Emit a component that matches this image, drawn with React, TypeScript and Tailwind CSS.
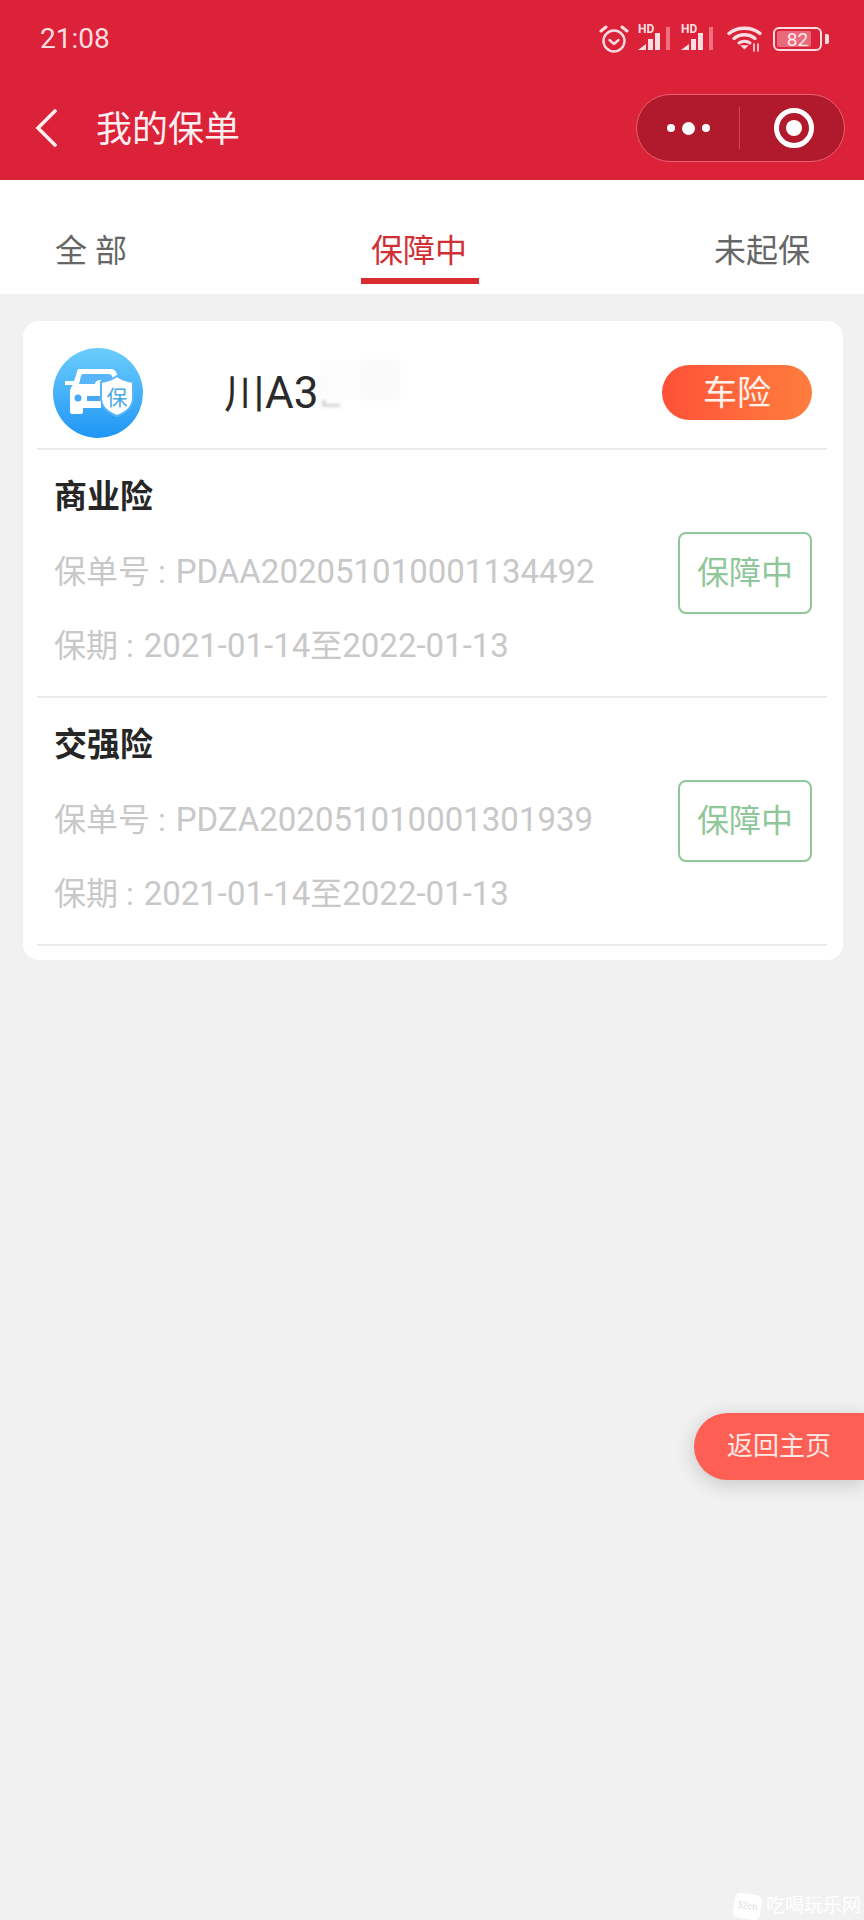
import React from 'react';

const policies = [
  { name: '商业险', no: 'PDAA202051010001134492' },
  { name: '交强险', no: 'PDZA202051010001301939' },
];

const Signal = () => (
  <div className="relative h-[26px] w-[34px]">
    <span className="absolute left-0 top-[-3px] text-[12px] leading-[12px] font-bold text-[#fbdde1]">HD</span>
    <svg width="34" height="26" viewBox="0 0 34 26" className="absolute left-0 top-0">
      <path d="M0 24 L8 18 V24 Z" fill="#fbdde1" />
      <rect x="10" y="13" width="5" height="11" fill="#fbdde1" />
      <rect x="17" y="7" width="5" height="17" fill="#fbdde1" />
      <rect x="28" y="1" width="4" height="23" fill="#f0707f" />
    </svg>
  </div>
);

const StatusIcons = () => (
  <div className="mr-[8px] flex items-center">
    {/* alarm */}
    <svg width="30" height="30" viewBox="0 0 30 30" fill="none" stroke="#fbdde1" strokeWidth="2.4">
      <circle cx="15" cy="17" r="10.5" />
      <path d="M10.5 16 L15 20 L19.5 16" strokeLinecap="round" strokeLinejoin="round" />
      <path d="M2 7 L7 3" strokeLinecap="round" strokeWidth="3" />
      <path d="M28 7 L23 3" strokeLinecap="round" strokeWidth="3" />
    </svg>
    <div className="ml-[9px]"><Signal /></div>
    <div className="ml-[9px]"><Signal /></div>
    {/* wifi */}
    <svg width="36" height="26" viewBox="0 0 36 26" fill="none" className="ml-[12px]" stroke="#fbdde1" strokeLinecap="round">
      <path d="M2 7.5 C10 0.5 25 0.5 33 7.5" strokeWidth="3.4" />
      <path d="M7 12.5 C13 7.5 22 7.5 28 12.5" strokeWidth="3.4" />
      <path d="M12 17 C15 14.5 20 14.5 23 17" strokeWidth="3" />
      <path d="M15 20 L17.5 22.5 L20 20 Z" fill="#fbdde1" strokeWidth="1.5" />
      <path d="M27 18 V25 M31 18 V25" strokeWidth="1.6" />
    </svg>
    {/* battery */}
    <div className="ml-[10px] flex items-center">
      <div className="relative flex h-[24px] w-[49px] items-center rounded-[6px] border-[2.5px] border-[#fbdde1] p-[2px]">
        <div className="h-full w-[82%] rounded-[2px] bg-[#ea6a7b]" />
        <span className="absolute inset-0 flex items-center justify-center text-[19px] leading-none text-[#fde8ea]">82</span>
      </div>
      <div className="ml-[3px] h-[10px] w-[4px] rounded-r-[2px] bg-[#fbdde1]" />
    </div>
  </div>
);

const CarLogo = () => (
  <div className="relative h-[90px] w-[90px] shrink-0">
    <svg width="90" height="90" viewBox="0 0 90 90">
      <defs>
        <linearGradient id="logoBg" x1="0" y1="0" x2="0" y2="1">
          <stop offset="0" stopColor="#6ccdfc" />
          <stop offset="1" stopColor="#1f96f5" />
        </linearGradient>
      </defs>
      <circle cx="45" cy="45" r="45" fill="url(#logoBg)" />
      <path
        d="M25 21 H58 C61 21 63 23 64 26 L66 32 H48 V60 H30 V64 C30 65 29 66 28 66 H19 C18 66 17 65 17 64 V44 C17 41 18 39 20 37 H12 V33 H21 Z"
        fill="#fff"
      />
      <path d="M26 36 L28 28 C28.5 26 29.5 26 31 26 H56 C57.5 26 58.5 27 59 28 L60 32 H48 C44 32 42 34 42 36 Z" fill="#58b5f8" />
      <circle cx="25" cy="50" r="3.5" fill="#45aaf7" />
      <rect x="34" y="48" width="13" height="5" fill="#45aaf7" />
      <path d="M48 34 C55 33 60 31 64 28 C68 31 73 33 80 34 V50 C80 59 72 65 64 68 C56 65 48 59 48 50 Z" fill="#fff" stroke="#58b5f8" strokeWidth="2" />
    </svg>
    <span className="absolute left-[49px] top-[35px] w-[30px] text-center text-[21px] leading-[30px] text-[#4ba9e2]">保</span>
  </div>
);

const PolicyRow = ({ name, no }: { name: string; no: string }) => (
  <div className="ml-[14px] mr-[16px] h-[248px] border-b-2 border-[#ececec] pl-[17px] pr-[15px] pt-[24px]">
    <div className="text-[33px] leading-[46px] font-bold text-[#262626]">{name}</div>
    <div className="mt-[15px] flex items-start justify-between">
      <div className="text-[32px] text-[#c8c8c8]">
        <div className="flex h-[74px] items-center whitespace-pre">
          保单号 : <span className="ml-[2px] text-[33px]">{no}</span>
        </div>
        <div className="flex h-[74px] items-center whitespace-pre">
          保期 : <span className="ml-[2px] text-[33px]">2021-01-14</span>至<span className="text-[33px]">2022-01-13</span>
        </div>
      </div>
      <div className="-mt-[3px] flex h-[82px] w-[134px] items-center justify-center rounded-[8px] border-2 border-[#8fc79a] text-[32px] text-[#8fc79a]">
        保障中
      </div>
    </div>
  </div>
);

export default function App() {
  return (
    <div className='relative h-[1920px] w-[864px] overflow-hidden bg-[#f1f1f1] font-["Roboto","Noto_Sans_CJK_SC",sans-serif]'>
      {/* Header */}
      <div className="h-[180px] bg-[#dc2239] pl-[40px] pr-[27px] text-white">
        <div className="flex h-[78px] items-center justify-between">
          <span className="text-[28px] text-[#fbdde1]">21:08</span>
          <StatusIcons />
        </div>
        <div className="-ml-[5px] mt-[16px] flex h-[68px] items-center justify-between">
          <div className="flex items-center">
            <svg width="24" height="38" viewBox="0 0 24 38" fill="none" stroke="#fdeef0" strokeWidth="3.6" strokeLinecap="round">
              <path d="M20 2 L3 19 L20 36" />
            </svg>
            <span className="ml-[37px] mt-[3px] text-[36px] leading-none text-[#fdeef0]">我的保单</span>
          </div>
          <div className="-mr-[8px] flex h-[68px] w-[209px] items-center rounded-full border border-[#e8606f] bg-[#b01a2c]">
            <div className="flex flex-1 items-center justify-center gap-[7px]">
              <span className="h-[8px] w-[8px] rounded-full bg-white" />
              <span className="h-[13px] w-[13px] rounded-full bg-white" />
              <span className="h-[8px] w-[8px] rounded-full bg-white" />
            </div>
            <div className="h-[42px] w-px bg-[#cf4656]" />
            <div className="flex w-[104px] items-center justify-center pl-[4px]">
              <div className="flex h-[40px] w-[40px] items-center justify-center rounded-full border-[5px] border-white">
                <span className="h-[16px] w-[16px] rounded-full bg-white" />
              </div>
            </div>
          </div>
        </div>
      </div>

      {/* Tabs */}
      <div className="flex h-[114px] items-start justify-between bg-white pl-[55px] pr-[54px] pt-[51px] text-[32px] leading-[40px] text-[#666666]">
        <span className="whitespace-pre">全 部</span>
        <div className="relative -ml-[3px] text-[#cf2f35]">
          保障中
          <div className="absolute -left-[10px] top-[47px] h-[6px] w-[118px] bg-[#d92b30]" />
        </div>
        <span>未起保</span>
      </div>

      {/* Card */}
      <div className="mx-[23px] mt-[27px] h-[639px] w-[820px] rounded-[16px] bg-white">
        <div className="relative ml-[14px] mr-[16px] flex h-[129px] items-center border-b-2 border-[#ececec] pl-[16px] pr-[15px] pt-[16px]">
          <CarLogo />
          <span className="ml-[81px] text-[41px] leading-none text-[#2a2a2a]">
            川<span className="text-[44px]">A3</span>
          </span>
          <span className="text-[42px] leading-none text-[#d8d8d8] blur-[1.5px]">L</span>
          <div className="absolute left-[283px] top-[39px] h-[40px] w-[40px] bg-[#fcfcfc] blur-[1px]" />
          <div className="absolute left-[323px] top-[39px] h-[40px] w-[40px] bg-[#fafafa] blur-[1px]" />
          <div className="ml-auto flex h-[55px] w-[150px] items-center justify-center rounded-full bg-gradient-to-r from-[#fe4f38] to-[#fe7d3d] text-[34px] leading-none text-[#fff3ec]">
            车险
          </div>
        </div>
        {policies.map(p => (
          <PolicyRow key={p.no} name={p.name} no={p.no} />
        ))}
      </div>

      {/* Float button */}
      <div className="absolute right-0 top-[1413px] flex h-[67px] w-[170px] items-center justify-center rounded-l-full bg-[#fd5f55] text-[26px] text-[#ffe9e5] shadow-[0_4px_20px_rgba(0,0,0,0.18)]">
        返回主页
      </div>

      {/* Watermark */}
      <div className="absolute left-[734px] top-[1893px] flex items-center">
        <div className="flex h-[25px] w-[27px] rotate-[8deg] items-center justify-center rounded-[5px] bg-white text-[9px] text-[#dddddd]">52ch</div>
        <span className="ml-[5px] whitespace-nowrap text-[19px] leading-[26px] text-white">吃喝玩乐网</span>
      </div>
    </div>
  );
}
